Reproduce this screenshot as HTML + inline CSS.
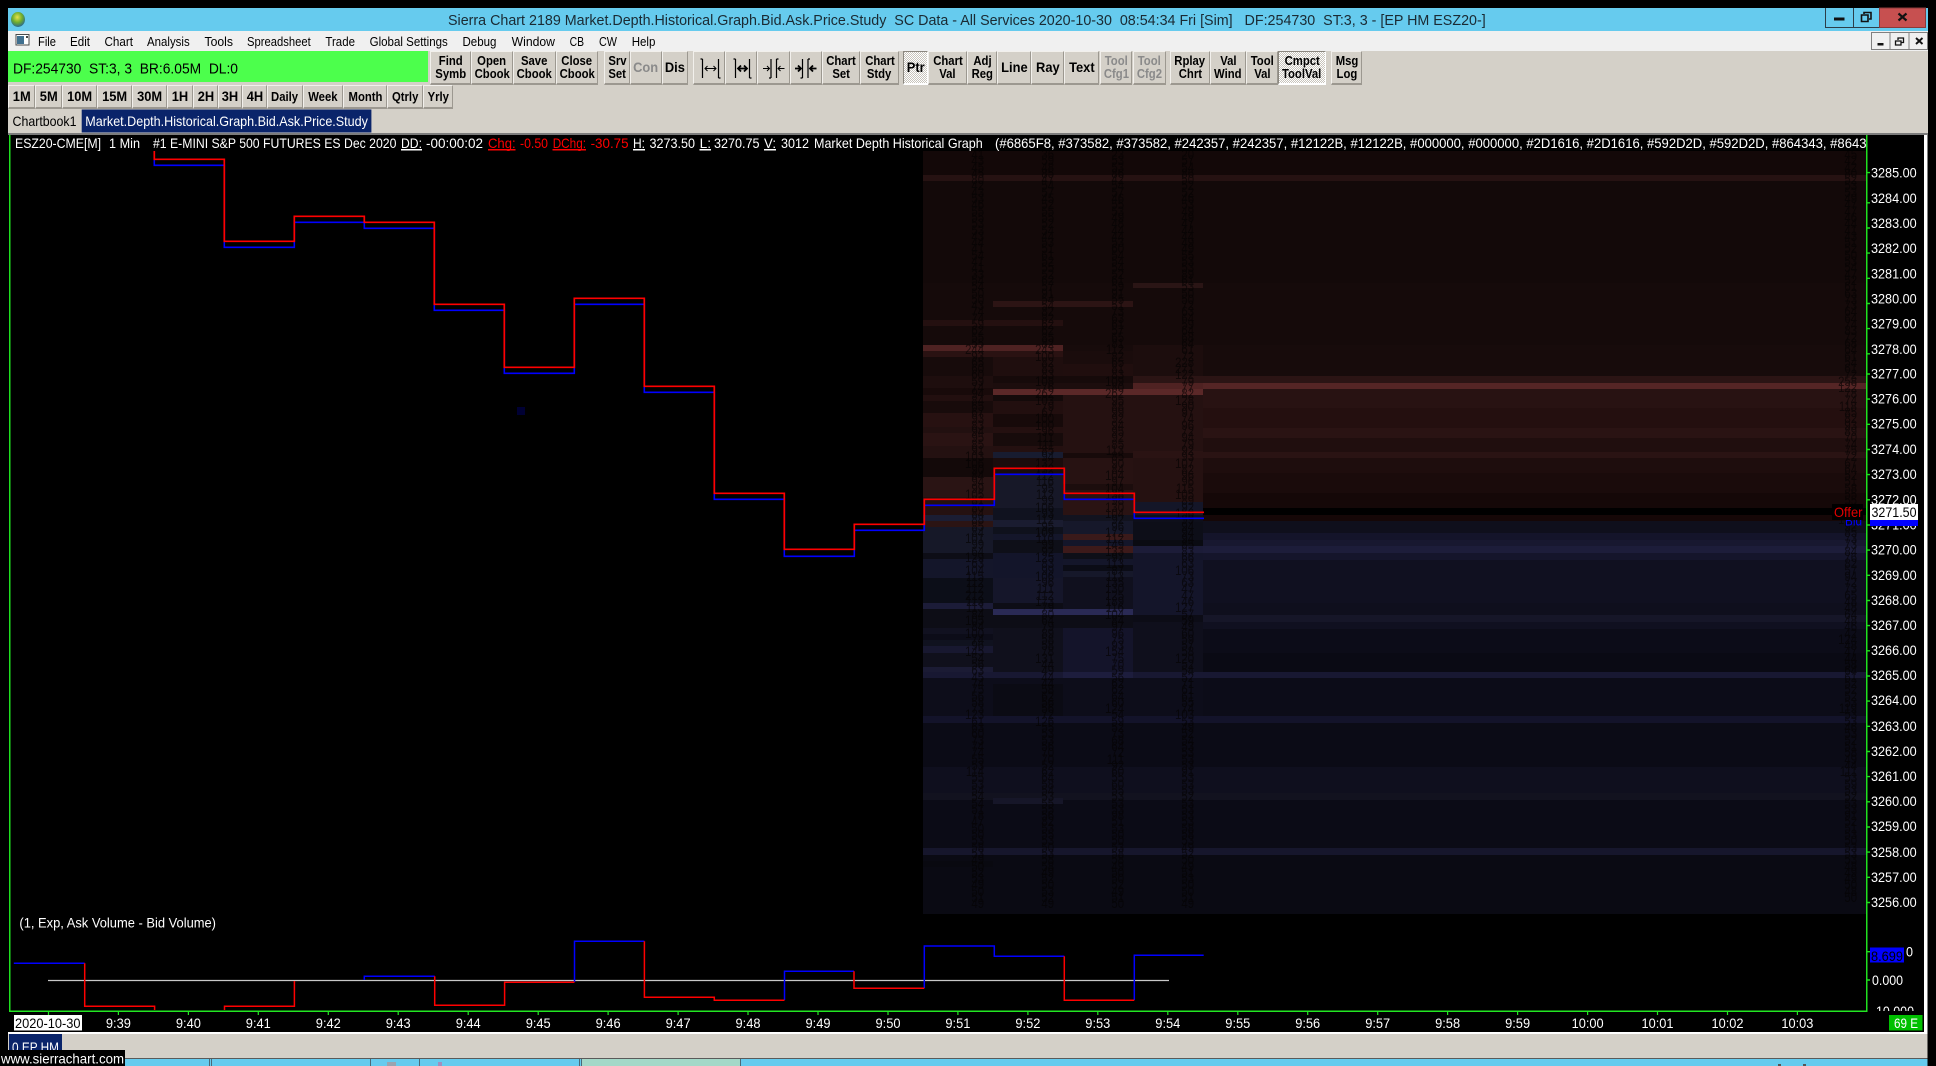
<!DOCTYPE html>
<html>
<head>
<meta charset="utf-8">
<title>Sierra Chart</title>
<style>
html,body{margin:0;padding:0;background:#000;width:1936px;height:1066px;overflow:hidden}
#p{position:relative;width:1936px;height:1066px;overflow:hidden;background:#000}
svg{position:absolute;left:0;top:0}
text{font-family:"Liberation Sans",sans-serif;font-size:14px;fill:#fff}
.b{position:absolute;box-sizing:border-box;background:#d4d0c8;border:1px solid;border-color:#f2f0ec #9c9890 #9c9890 #f2f0ec;border-bottom-width:2px;display:flex;flex-direction:column;align-items:center;justify-content:center;font:bold 13px/13.3px "Liberation Sans",sans-serif;color:#000;overflow:visible}
.b i{font-style:normal;display:block;white-space:nowrap;transform:scaleX(.87)}
.r1{top:51px;height:33.5px}
.r2{top:85px;height:24px}
.l{font-size:14px}
.l i{transform:scaleX(.92)}
.d{color:#8a8a8a}
.p{background:repeating-conic-gradient(#fff 0 25%,#c8c4bc 0 50%) 0 0/2px 2px;border-color:#8c8880 #fff #fff #8c8880}
.n{position:absolute;top:151px;height:763px;width:40px;overflow:hidden;text-align:right;white-space:pre-line;font:14px/6.295px "Liberation Sans",sans-serif;color:#050303;opacity:.65;transform:scaleX(.81);transform-origin:right top}
</style>
</head>
<body>
<div id="p">
<svg width="1936" height="1066" viewBox="0 0 1936 1066" shape-rendering="crispEdges">
<defs>
<radialGradient id="g" cx="45%" cy="35%" r="70%"><stop offset="0" stop-color="#e8e24a"/><stop offset=".5" stop-color="#6fae2e"/><stop offset="1" stop-color="#1f5f9e"/></radialGradient>
</defs>
<rect x="8" y="8" width="1920" height="23" fill="#66cbee"/>
<rect x="8" y="31" width="1920" height="20" fill="#f0f0f0"/>
<rect x="8" y="51" width="1920" height="83" fill="#d4d0c8"/>
<rect x="8" y="51" width="420" height="31" fill="#4cff4c"/>
<rect x="8" y="133" width="1920" height="2" fill="#7c7c7c"/>
<rect x="8" y="135" width="1916" height="897" fill="#000"/>
<rect x="1924" y="135" width="3.5" height="899" fill="#fff"/>
<rect x="8" y="1032" width="1919.5" height="2" fill="#fff"/>
<rect x="8" y="1034" width="1919.5" height="24" fill="#d4d0c8"/>
<rect x="125" y="1058" width="1802.5" height="1" fill="#5a5a5a"/>
<rect x="125" y="1059" width="1802.5" height="7" fill="#66cbee"/>
<rect x="581" y="1059" width="159" height="7" fill="#a4d8c8"/>
<path d="M209.5 1059v7M211.5 1059v7M370.5 1059v7M419.5 1059v7M579.5 1059v7M581.5 1059v7M740.5 1059v7" stroke="#4a6a78" fill="none"/>
<rect x="387" y="1062" width="9" height="4" fill="#9aa4b0"/>
<rect x="438" y="1062" width="4" height="4" fill="#a090c0"/>
<rect x="1778" y="1064" width="3" height="2" fill="#555"/>
<rect x="1803" y="1064" width="3" height="2" fill="#555"/>

<!-- heatmap base -->
<rect x="923" y="151" width="943" height="24" fill="#130808"/>
<rect x="923" y="175" width="943" height="6" fill="#261212"/>
<rect x="923" y="181" width="943" height="102" fill="#130909"/>
<rect x="923" y="283" width="943" height="62" fill="#150a0a"/>
<rect x="923" y="345" width="280" height="170" fill="#1c0d0d"/>
<!-- column 1 -->
<rect x="923" y="320" width="70" height="6" fill="#241010"/>
<rect x="923" y="345" width="70" height="6" fill="#4e2222"/>
<rect x="923" y="351" width="70" height="6" fill="#2a1212"/>
<rect x="923" y="357" width="70" height="19" fill="#170b0b"/>
<rect x="923" y="376" width="70" height="12" fill="#1e0e0e"/>
<rect x="923" y="388" width="70" height="7" fill="#180a0a"/>
<rect x="923" y="395" width="70" height="6" fill="#220f0f"/>
<rect x="923" y="401" width="70" height="12" fill="#180b0b"/>
<rect x="923" y="413" width="70" height="14" fill="#271111"/>
<rect x="923" y="427" width="70" height="6" fill="#221010"/>
<rect x="923" y="433" width="70" height="13" fill="#2a1313"/>
<rect x="923" y="446" width="70" height="12" fill="#241111"/>
<rect x="923" y="458" width="70" height="19" fill="#130909"/>
<rect x="923" y="477" width="70" height="20" fill="#2a1414"/>
<rect x="923" y="497" width="70" height="18" fill="#251111"/>
<rect x="923" y="515" width="70" height="6" fill="#1b1d33"/>
<rect x="923" y="521" width="70" height="6" fill="#2b1414"/>
<rect x="923" y="527" width="70" height="26" fill="#161828"/>
<rect x="923" y="553" width="70" height="6" fill="#0d0d16"/>
<rect x="923" y="559" width="70" height="19" fill="#14162a"/>
<rect x="923" y="578" width="70" height="25" fill="#0c0e18"/>
<rect x="923" y="603" width="70" height="6" fill="#1c1c38"/>
<rect x="923" y="609" width="70" height="19" fill="#0d0d16"/>
<rect x="923" y="628" width="70" height="6" fill="#111120"/>
<rect x="923" y="634" width="70" height="6" fill="#0c0c18"/>
<rect x="923" y="640" width="70" height="6" fill="#10121f"/>
<rect x="923" y="646" width="70" height="7" fill="#181830"/>
<rect x="923" y="653" width="70" height="14" fill="#10101c"/>
<rect x="923" y="667" width="70" height="11" fill="#1b1b34"/>
<!-- column 2 -->
<rect x="993" y="301" width="70" height="6" fill="#2c1414"/>
<rect x="993" y="320" width="70" height="6" fill="#241010"/>
<rect x="993" y="345" width="70" height="6" fill="#4e2222"/>
<rect x="993" y="351" width="70" height="6" fill="#2a1212"/>
<rect x="993" y="357" width="70" height="19" fill="#1f0e0e"/>
<rect x="993" y="376" width="70" height="7" fill="#160a0a"/>
<rect x="993" y="383" width="70" height="6" fill="#1c0d0d"/>
<rect x="993" y="389" width="70" height="6" fill="#5b2828"/>
<rect x="993" y="395" width="70" height="6" fill="#140a0a"/>
<rect x="993" y="401" width="70" height="13" fill="#220f0f"/>
<rect x="993" y="414" width="70" height="13" fill="#170a0a"/>
<rect x="993" y="427" width="70" height="6" fill="#241010"/>
<rect x="993" y="433" width="70" height="13" fill="#170b0b"/>
<rect x="993" y="446" width="70" height="6" fill="#241010"/>
<rect x="993" y="452" width="70" height="6" fill="#181c30"/>
<rect x="993" y="458" width="70" height="17" fill="#1a0c0c"/>
<rect x="993" y="475" width="70" height="33" fill="#171828"/>
<rect x="993" y="508" width="70" height="12" fill="#10121f"/>
<rect x="993" y="520" width="70" height="7" fill="#1a1c30"/>
<rect x="993" y="527" width="70" height="7" fill="#0f111c"/>
<rect x="993" y="534" width="70" height="6" fill="#14162a"/>
<rect x="993" y="540" width="70" height="13" fill="#0e0f18"/>
<rect x="993" y="553" width="70" height="25" fill="#13152a"/>
<rect x="993" y="578" width="70" height="25" fill="#15162a"/>
<rect x="993" y="603" width="70" height="6" fill="#0d0d16"/>
<rect x="993" y="609" width="70" height="6" fill="#2a2a55"/>
<rect x="993" y="615" width="70" height="13" fill="#0d0d16"/>
<rect x="993" y="628" width="70" height="44" fill="#10101c"/>
<!-- column 3 -->
<rect x="1063" y="301" width="70" height="6" fill="#2c1414"/>
<rect x="1063" y="345" width="70" height="6" fill="#170b0b"/>
<rect x="1063" y="351" width="70" height="13" fill="#1a0c0c"/>
<rect x="1063" y="364" width="70" height="12" fill="#200e0e"/>
<rect x="1063" y="376" width="70" height="7" fill="#160a0a"/>
<rect x="1063" y="383" width="70" height="6" fill="#1c0d0d"/>
<rect x="1063" y="389" width="70" height="6" fill="#5b2828"/>
<rect x="1063" y="395" width="70" height="58" fill="#251111"/>
<rect x="1063" y="453" width="70" height="5" fill="#170a0a"/>
<rect x="1063" y="458" width="70" height="26" fill="#271212"/>
<rect x="1063" y="484" width="70" height="6" fill="#1c0d0d"/>
<rect x="1063" y="490" width="70" height="25" fill="#2a1313"/>
<rect x="1063" y="515" width="70" height="6" fill="#12131f"/>
<rect x="1063" y="521" width="70" height="13" fill="#16182a"/>
<rect x="1063" y="534" width="70" height="6" fill="#3a1a1a"/>
<rect x="1063" y="540" width="70" height="6" fill="#14162a"/>
<rect x="1063" y="546" width="70" height="7" fill="#3d1a1a"/>
<rect x="1063" y="553" width="70" height="6" fill="#0e0f18"/>
<rect x="1063" y="559" width="70" height="6" fill="#14162a"/>
<rect x="1063" y="565" width="70" height="6" fill="#0b0c16"/>
<rect x="1063" y="571" width="70" height="6" fill="#16182a"/>
<rect x="1063" y="577" width="70" height="32" fill="#10101e"/>
<rect x="1063" y="609" width="70" height="6" fill="#2a2a55"/>
<rect x="1063" y="615" width="70" height="13" fill="#0d0d16"/>
<rect x="1063" y="628" width="70" height="44" fill="#14142a"/>
<!-- column 4 -->
<rect x="1133" y="283" width="70" height="5" fill="#2a1515"/>
<rect x="1133" y="376" width="70" height="7" fill="#2b1414"/>
<rect x="1133" y="383" width="70" height="6" fill="#4f2222"/>
<rect x="1133" y="389" width="70" height="6" fill="#5b2828"/>
<rect x="1133" y="395" width="70" height="107" fill="#251111"/>
<rect x="1133" y="451" width="70" height="7" fill="#2a1313"/>
<rect x="1133" y="502" width="70" height="13" fill="#141628"/>
<rect x="1133" y="515" width="70" height="7" fill="#0e0f1a"/>
<rect x="1133" y="522" width="70" height="18" fill="#0d0e18"/>
<rect x="1133" y="540" width="70" height="6" fill="#0a0b12"/>
<rect x="1133" y="546" width="70" height="7" fill="#1c1c38"/>
<rect x="1133" y="553" width="70" height="62" fill="#14152a"/>
<rect x="1133" y="615" width="70" height="7" fill="#0c0c16"/>
<rect x="1133" y="622" width="70" height="50" fill="#0f0f1c"/>
<!-- right region -->
<rect x="1203" y="345" width="663" height="31" fill="#170b0b"/>
<rect x="1203" y="376" width="663" height="7" fill="#2b1414"/>
<rect x="1203" y="383" width="663" height="6" fill="#552525"/>
<rect x="1203" y="389" width="663" height="19" fill="#281212"/>
<rect x="1203" y="408" width="663" height="20" fill="#240f0f"/>
<rect x="1203" y="428" width="663" height="10" fill="#2a1313"/>
<rect x="1203" y="438" width="663" height="14" fill="#200e0e"/>
<rect x="1203" y="452" width="663" height="6" fill="#2a1313"/>
<rect x="1203" y="458" width="663" height="15" fill="#1e0d0d"/>
<rect x="1203" y="473" width="663" height="20" fill="#1a0b0b"/>
<rect x="1203" y="493" width="663" height="15" fill="#150808"/>
<rect x="1203" y="508" width="663" height="7" fill="#000"/>
<rect x="1203" y="515" width="663" height="6" fill="#150707"/>
<rect x="1203" y="521" width="663" height="12" fill="#0f0f1c"/>
<rect x="1203" y="533" width="663" height="7" fill="#14142a"/>
<rect x="1203" y="540" width="663" height="6" fill="#181830"/>
<rect x="1203" y="546" width="663" height="7" fill="#1d1d3a"/>
<rect x="1203" y="553" width="663" height="7" fill="#15152b"/>
<rect x="1203" y="560" width="663" height="43" fill="#101020"/>
<rect x="1203" y="603" width="663" height="12" fill="#0f0f1d"/>
<rect x="1203" y="615" width="663" height="7" fill="#161628"/>
<rect x="1203" y="622" width="663" height="7" fill="#101020"/>
<rect x="1203" y="629" width="663" height="24" fill="#0c0c18"/>
<rect x="1203" y="653" width="663" height="19" fill="#0a0a14"/>
<!-- lower area all columns -->
<rect x="923" y="678" width="943" height="236" fill="#0c0c18"/>
<rect x="923" y="672" width="943" height="6" fill="#181832"/>
<rect x="1063" y="672" width="70" height="6" fill="#1d1d3d"/>
<rect x="923" y="678" width="280" height="38" fill="#0d0d1a"/>
<rect x="993" y="684" width="70" height="32" fill="#0b0b14"/>
<rect x="923" y="716" width="943" height="7" fill="#13132a"/>
<rect x="923" y="723" width="943" height="44" fill="#0b0b16"/>
<rect x="923" y="767" width="943" height="26" fill="#0f0f1e"/>
<rect x="923" y="793" width="943" height="7" fill="#12121f"/>
<rect x="923" y="800" width="943" height="48" fill="#0b0b16"/>
<rect x="993" y="798" width="70" height="6" fill="#161628"/>
<rect x="923" y="848" width="943" height="7" fill="#16162c"/>
<rect x="923" y="855" width="943" height="59" fill="#0a0a13"/>
<rect x="923" y="861" width="70" height="6" fill="#090910"/>

<!-- frame lines -->
<rect x="9" y="135" width="1.5" height="877" fill="#1fe01f"/>
</svg>

<div class="n" style="left:944px">41
43
45
45
80
42
43
53
46
55
55
53
53
43
44
41
54
41
41
33
54
54
50
50
43
74
74
59
62
55
55
244
93
65
60
60
59
74
94
84
65
67
93
83
94
95
85
91
103
106
90
84
94
99
105
81
80
84
88
85
84
101
99
64
129
63
104
115
112
112
212
113
113
84
105
84
100
74
96
145
54
56
63
45
74
75
56
58
73
123
61
63
60
73
74
74
55
53
114
55
53
54
54
54
51
78
47
50
50
53
58
53
49
50
52
53
49
50
51
49</div>
<div class="n" style="left:1014px">36
59
48
85
47
54
57
45
52
55
55
52
54
44
53
51
61
52
55
52
62
57
91
54
54
82
82
62
62
85
82
243
100
82
83
83
108
76
262
103
79
67
100
100
96
111
111
85
94
132
132
112
116
95
112
99
106
93
112
95
109
110
99
92
125
83
99
106
96
111
112
173
79
80
64
79
89
58
58
78
131
44
49
44
44
58
62
56
56
72
126
55
53
53
56
70
70
52
62
64
58
54
53
55
55
56
82
53
55
53
50
53
58
58
49
52
50
53
52
49</div>
<div class="n" style="left:1084px">23
53
53
86
42
54
57
46
55
53
49
48
44
44
53
60
54
54
54
52
61
59
91
55
51
73
63
61
57
65
81
112
82
65
81
83
109
80
262
95
88
99
92
94
95
92
85
113
85
90
84
104
97
104
138
98
130
104
92
96
172
112
149
133
97
113
87
113
135
130
125
189
116
104
84
97
96
75
93
154
75
70
59
56
62
62
64
60
124
54
59
52
73
68
64
72
111
92
60
55
60
55
53
53
53
98
51
53
50
50
53
58
58
49
50
50
52
49
51
50</div>
<div class="n" style="left:1154px">20
57
54
86
50
52
52
46
53
49
49
47
44
44
49
49
55
53
53
89
61
53
50
50
72
63
64
59
64
68
64
61
72
228
271
122
79
77
82
128
90
97
74
96
72
94
79
92
93
107
82
96
96
115
105
89
92
156
99
94
94
94
85
83
66
63
106
73
63
47
47
46
127
57
59
49
60
59
57
58
120
52
54
52
71
61
61
55
74
103
53
49
52
54
53
53
53
53
91
53
53
53
52
53
53
53
53
58
58
53
49
52
50
49
51
53
50
50
51
49</div>
<div class="n" style="left:1817px">45
42
42
80
52
53
53
49
47
47
46
44
41
43
51
52
50
53
54
47
52
61
63
73
73
64
64
74
83
72
68
64
61
54
61
72
258
122
78
74
118
85
82
93
89
70
74
75
72
67
64
52
51
58
55
55
54
90
151
92
85
73
73
84
76
82
57
94
72
73
65
48
48
64
48
46
42
124
48
47
44
58
64
61
52
52
52
53
119
53
53
46
53
52
51
58
49
44
111
53
59
53
52
53
53
91
52
51
53
50
53
53
53
48
49
49
50
48
50</div>

<svg width="1936" height="1066" viewBox="0 0 1936 1066">
<!-- title bar -->
<ellipse cx="18" cy="19.5" rx="7" ry="7.5" fill="url(#g)"/>
<text x="448" y="25" font-size="15" style="font-size:15px;fill:#1a2a33" textLength="1037.7" lengthAdjust="spacingAndGlyphs" xml:space="preserve">Sierra Chart 2189 Market.Depth.Historical.Graph.Bid.Ask.Price.Study  SC Data - All Services 2020-10-30  08:54:34 Fri [Sim]   DF:254730  ST:3, 3 - [EP HM ESZ20-]</text>
<!-- window buttons -->
<path d="M1825.5 8v19.5H1879.5M1853.5 8v19.5" stroke="#2c3e48" fill="none" stroke-width="1"/>
<rect x="1879.5" y="8" width="46" height="19.5" fill="#c75050" stroke="#8a3a3a"/>
<rect x="1834" y="17.5" width="10.5" height="3" fill="#111"/>
<path d="M1864 14V12.5H1871V19H1869M1861.5 15H1868V21.5H1861.5Z" stroke="#111" stroke-width="1.6" fill="none"/>
<path d="M1898.5 13.5L1906.5 20.5M1906.5 13.5L1898.5 20.5" stroke="#111" stroke-width="2.2" fill="none"/>
<!-- MDI buttons -->
<rect x="1871.5" y="32.5" width="18.5" height="17" fill="#f0f0f0" stroke="#808080"/>
<rect x="1890" y="32.5" width="19" height="17" fill="#f0f0f0" stroke="#808080"/>
<rect x="1909" y="32.5" width="18.5" height="17" fill="#f0f0f0" stroke="#808080"/>
<rect x="1877.5" y="43" width="6" height="2.5" fill="#111"/>
<path d="M1898 40V38H1903.5V42.5H1901.5M1895.5 41H1901V45H1895.5Z" stroke="#111" stroke-width="1.3" fill="none"/>
<path d="M1916 38L1922.5 44M1922.5 38L1916 44" stroke="#111" stroke-width="1.9" fill="none"/>
<!-- menu -->
<rect x="16" y="34.5" width="13" height="10.5" fill="#fff" stroke="#4a4a4a"/>
<rect x="17" y="36" width="7" height="8" fill="#3f6f8f"/>
<rect x="26" y="36" width="2" height="2" fill="#444"/>
<g style="fill:#000">
<text x="38" y="46" textLength="18" lengthAdjust="spacingAndGlyphs" style="font-size:13px;fill:#000">File</text>
<text x="70" y="46" textLength="20" lengthAdjust="spacingAndGlyphs" style="font-size:13px;fill:#000">Edit</text>
<text x="104.5" y="46" textLength="28.5" lengthAdjust="spacingAndGlyphs" style="font-size:13px;fill:#000">Chart</text>
<text x="147" y="46" textLength="42.7" lengthAdjust="spacingAndGlyphs" style="font-size:13px;fill:#000">Analysis</text>
<text x="204.5" y="46" textLength="28.5" lengthAdjust="spacingAndGlyphs" style="font-size:13px;fill:#000">Tools</text>
<text x="247" y="46" textLength="63.7" lengthAdjust="spacingAndGlyphs" style="font-size:13px;fill:#000">Spreadsheet</text>
<text x="325.4" y="46" textLength="29.6" lengthAdjust="spacingAndGlyphs" style="font-size:13px;fill:#000">Trade</text>
<text x="369.6" y="46" textLength="78.2" lengthAdjust="spacingAndGlyphs" style="font-size:13px;fill:#000">Global Settings</text>
<text x="462.5" y="46" textLength="33.9" lengthAdjust="spacingAndGlyphs" style="font-size:13px;fill:#000">Debug</text>
<text x="511.6" y="46" textLength="43.4" lengthAdjust="spacingAndGlyphs" style="font-size:13px;fill:#000">Window</text>
<text x="569.6" y="46" textLength="14.4" lengthAdjust="spacingAndGlyphs" style="font-size:13px;fill:#000">CB</text>
<text x="599" y="46" textLength="18" lengthAdjust="spacingAndGlyphs" style="font-size:13px;fill:#000">CW</text>
<text x="631.7" y="46" textLength="23.7" lengthAdjust="spacingAndGlyphs" style="font-size:13px;fill:#000">Help</text>
</g>
<text x="13" y="73.5" textLength="225" lengthAdjust="spacingAndGlyphs" xml:space="preserve" style="font-size:15px;fill:#000">DF:254730  ST:3, 3  BR:6.05M  DL:0</text>
<!-- tabs -->
<rect x="81.7" y="109.5" width="289.7" height="23" fill="#0a246a"/>
<text x="12.5" y="126" textLength="64" lengthAdjust="spacingAndGlyphs" style="font-size:14px;fill:#000">Chartbook1</text>
<text x="85.3" y="126" textLength="282.6" lengthAdjust="spacingAndGlyphs" style="font-size:14px">Market.Depth.Historical.Graph.Bid.Ask.Price.Study</text>
<!-- info line -->
<text x="15" y="148" textLength="86" lengthAdjust="spacingAndGlyphs">ESZ20-CME[M]</text>
<text x="109" y="148" textLength="31" lengthAdjust="spacingAndGlyphs">1 Min</text>
<text x="153" y="148" textLength="243.4" lengthAdjust="spacingAndGlyphs">#1 E-MINI S&amp;P 500 FUTURES ES Dec 2020</text>
<text x="401" y="148" textLength="21" lengthAdjust="spacingAndGlyphs">DD:</text>
<text x="426" y="148" textLength="57" lengthAdjust="spacingAndGlyphs">-00:00:02</text>
<text x="488" y="148" textLength="27.6" lengthAdjust="spacingAndGlyphs" style="fill:#f00">Chg:</text>
<text x="520" y="148" textLength="28" lengthAdjust="spacingAndGlyphs" style="fill:#f00">-0.50</text>
<text x="552.7" y="148" textLength="33.3" lengthAdjust="spacingAndGlyphs" style="fill:#f00">DChg:</text>
<text x="590.6" y="148" textLength="38" lengthAdjust="spacingAndGlyphs" style="fill:#f00">-30.75</text>
<text x="633" y="148" textLength="12" lengthAdjust="spacingAndGlyphs">H:</text>
<text x="649.5" y="148" textLength="45.5" lengthAdjust="spacingAndGlyphs">3273.50</text>
<text x="699.6" y="148" textLength="11.4" lengthAdjust="spacingAndGlyphs">L:</text>
<text x="714" y="148" textLength="45.5" lengthAdjust="spacingAndGlyphs">3270.75</text>
<text x="764" y="148" textLength="12" lengthAdjust="spacingAndGlyphs">V:</text>
<text x="781" y="148" textLength="28" lengthAdjust="spacingAndGlyphs">3012</text>
<text x="814" y="148" textLength="168.7" lengthAdjust="spacingAndGlyphs">Market Depth Historical Graph</text>
<text x="995" y="148" textLength="871.5" lengthAdjust="spacingAndGlyphs">(#6865F8, #373582, #373582, #242357, #242357, #12122B, #12122B, #000000, #000000, #2D1616, #2D1616, #592D2D, #592D2D, #864343, #8643</text>
<g shape-rendering="crispEdges">
<rect x="401" y="149" width="21" height="1.5" fill="#fff"/>
<rect x="488" y="149" width="27.6" height="1.5" fill="#f00"/>
<rect x="552.7" y="149" width="33.3" height="1.5" fill="#f00"/>
<rect x="633" y="149" width="12" height="1.5" fill="#fff"/>
<rect x="699.6" y="149" width="11.4" height="1.5" fill="#fff"/>
<rect x="764" y="149" width="12" height="1.5" fill="#fff"/>
<rect x="1866" y="135" width="1.5" height="877" fill="#1fe01f"/>
<rect x="9.5" y="1010.7" width="1858" height="1.5" fill="#22e622"/>
<rect x="517" y="407" width="8" height="8" fill="#000033"/>
</g>
<!-- price series -->
<path d="M154.3 159.3V165.3H224.3V247.3H294.3V222.3H364.3V228.3H434.3V310.3H504.3V373.3H574.3V304.3H644.3V392.3H714.3V499.3H784.3V556.3H854.3V530.3H924.3V505.3H994.3V474.3H1064.3V499.3H1134.3V518.3H1204" stroke="#0000ff" stroke-width="1.6" fill="none"/>
<path d="M154.3 151V159.3H224.3V241.3H294.3V216.3H364.3V222.3H434.3V304.3H504.3V367.3H574.3V298.3H644.3V386.3H714.3V493.3H784.3V549.3H854.3V524.3H924.3V499.3H994.3V468.3H1064.3V493.3H1134.3V512.3H1204" stroke="#ff0000" stroke-width="1.7" fill="none"/>
<!-- price scale -->
<path d="M1866 172.6h4M1866 202.8h4M1866 228h4M1866 253.1h4M1866 278.3h4M1866 303.5h4M1866 328.6h4M1866 353.8h4M1866 374h4M1866 399.1h4M1866 424.3h4M1866 449.5h4M1866 474.6h4M1866 499.8h4M1866 525h4M1866 550.1h4M1866 575.3h4M1866 600.5h4M1866 625.6h4M1866 650.8h4M1866 676h4M1866 701.1h4M1866 726.3h4M1866 751.5h4M1866 776.6h4M1866 801.8h4M1866 827h4M1866 852.1h4M1866 877.3h4M1866 902.5h4M1866 951.7h4M1866 980h4" stroke="#1fe01f" stroke-width="1.4" fill="none"/>
<g>
<text x="1871" y="177.6" textLength="45.7" lengthAdjust="spacingAndGlyphs">3285.00</text>
<text x="1871" y="202.8" textLength="45.7" lengthAdjust="spacingAndGlyphs">3284.00</text>
<text x="1871" y="228" textLength="45.7" lengthAdjust="spacingAndGlyphs">3283.00</text>
<text x="1871" y="253.1" textLength="45.7" lengthAdjust="spacingAndGlyphs">3282.00</text>
<text x="1871" y="278.3" textLength="45.7" lengthAdjust="spacingAndGlyphs">3281.00</text>
<text x="1871" y="303.5" textLength="45.7" lengthAdjust="spacingAndGlyphs">3280.00</text>
<text x="1871" y="328.6" textLength="45.7" lengthAdjust="spacingAndGlyphs">3279.00</text>
<text x="1871" y="353.8" textLength="45.7" lengthAdjust="spacingAndGlyphs">3278.00</text>
<text x="1871" y="378.6" textLength="45.7" lengthAdjust="spacingAndGlyphs">3277.00</text>
<text x="1871" y="403.6" textLength="45.7" lengthAdjust="spacingAndGlyphs">3276.00</text>
<text x="1871" y="428.6" textLength="45.7" lengthAdjust="spacingAndGlyphs">3275.00</text>
<text x="1871" y="454" textLength="45.7" lengthAdjust="spacingAndGlyphs">3274.00</text>
<text x="1871" y="479" textLength="45.7" lengthAdjust="spacingAndGlyphs">3273.00</text>
<text x="1871" y="504.3" textLength="45.7" lengthAdjust="spacingAndGlyphs">3272.00</text>
<text x="1871" y="529.5" textLength="45.7" lengthAdjust="spacingAndGlyphs">3271.00</text>
<text x="1871" y="554.5" textLength="45.7" lengthAdjust="spacingAndGlyphs">3270.00</text>
<text x="1871" y="580" textLength="45.7" lengthAdjust="spacingAndGlyphs">3269.00</text>
<text x="1871" y="605" textLength="45.7" lengthAdjust="spacingAndGlyphs">3268.00</text>
<text x="1871" y="630" textLength="45.7" lengthAdjust="spacingAndGlyphs">3267.00</text>
<text x="1871" y="655" textLength="45.7" lengthAdjust="spacingAndGlyphs">3266.00</text>
<text x="1871" y="680" textLength="45.7" lengthAdjust="spacingAndGlyphs">3265.00</text>
<text x="1871" y="705" textLength="45.7" lengthAdjust="spacingAndGlyphs">3264.00</text>
<text x="1871" y="731" textLength="45.7" lengthAdjust="spacingAndGlyphs">3263.00</text>
<text x="1871" y="756" textLength="45.7" lengthAdjust="spacingAndGlyphs">3262.00</text>
<text x="1871" y="781" textLength="45.7" lengthAdjust="spacingAndGlyphs">3261.00</text>
<text x="1871" y="806" textLength="45.7" lengthAdjust="spacingAndGlyphs">3260.00</text>
<text x="1871" y="831" textLength="45.7" lengthAdjust="spacingAndGlyphs">3259.00</text>
<text x="1871" y="857" textLength="45.7" lengthAdjust="spacingAndGlyphs">3258.00</text>
<text x="1871" y="882" textLength="45.7" lengthAdjust="spacingAndGlyphs">3257.00</text>
<text x="1871" y="907" textLength="45.7" lengthAdjust="spacingAndGlyphs">3256.00</text>
</g>
<!-- bid / offer -->
<text x="1845" y="525.5" textLength="17" lengthAdjust="spacingAndGlyphs" style="fill:#0000ff">Bid</text>
<rect x="1832" y="504" width="31" height="16" fill="#000" shape-rendering="crispEdges"/>
<text x="1834" y="517" textLength="28.5" lengthAdjust="spacingAndGlyphs" style="fill:#e00000">Offer</text>
<rect x="1870" y="520" width="48" height="6" fill="#0000ff" shape-rendering="crispEdges"/>
<rect x="1870" y="504" width="48" height="16" fill="#fff" shape-rendering="crispEdges"/>
<text x="1871.5" y="517" textLength="45" lengthAdjust="spacingAndGlyphs" style="fill:#000">3271.50</text>
<!-- study sub graph -->
<text x="19.4" y="927.5" textLength="196.6" lengthAdjust="spacingAndGlyphs">(1, Exp, Ask Volume - Bid Volume)</text>
<path d="M48 980.5H1169" stroke="#c8c8c8" stroke-width="1.3" fill="none"/>
<path d="M13.8 963.3H84.7M364.3 980V976.3H434.7M574.5 982V941.3H644.4M784.5 1000V971.3H854M924.3 988V946H994.3V956.3H1064.3M1134.3 1000V955.3H1203.7" stroke="#0000ff" stroke-width="1.5" fill="none"/>
<path d="M84.7 963.3V1006.3H154.6V1010M224.5 1010V1006.3H294.4V981M434.7 976.3V1005.3H504.6V982.3H574.5M644.4 941.3V997.3H714.3V1000.3H784.5M854 971.3V988.3H924.3M1064.3 956.3V1000.3H1134.3" stroke="#ff0000" stroke-width="1.5" fill="none"/>
<rect x="1870" y="947.3" width="34" height="15.4" fill="#0000ff" shape-rendering="crispEdges"/>
<text x="1871" y="961" textLength="32" lengthAdjust="spacingAndGlyphs" style="fill:#000">8.699</text>
<text x="1906" y="956.5" textLength="7" lengthAdjust="spacingAndGlyphs">0</text>
<text x="1872" y="985" textLength="31" lengthAdjust="spacingAndGlyphs">0.000</text>
<svg x="1870" y="1000" width="52" height="11"><text x="6" y="16" textLength="38" lengthAdjust="spacingAndGlyphs">10.000</text></svg>
<!-- time scale -->
<path d="M48.5 1011v4M118.4 1011v4M188.4 1011v4M258.3 1011v4M328.3 1011v4M398.2 1011v4M468.2 1011v4M538.2 1011v4M608.1 1011v4M678.1 1011v4M748 1011v4M818 1011v4M888 1011v4M957.9 1011v4M1027.9 1011v4M1097.8 1011v4M1167.8 1011v4M1237.8 1011v4M1307.7 1011v4M1377.7 1011v4M1447.6 1011v4M1517.6 1011v4M1587.6 1011v4M1657.5 1011v4M1727.5 1011v4M1797.4 1011v4" stroke="#22e622" stroke-width="1.2" fill="none"/>
<rect x="13.8" y="1015" width="68" height="15.7" fill="#fff" shape-rendering="crispEdges"/>
<text x="15" y="1028" textLength="65.5" lengthAdjust="spacingAndGlyphs" style="fill:#000">2020-10-30</text>
<g>
<text x="105.9" y="1028" textLength="25" lengthAdjust="spacingAndGlyphs">9:39</text>
<text x="175.9" y="1028" textLength="25" lengthAdjust="spacingAndGlyphs">9:40</text>
<text x="245.8" y="1028" textLength="25" lengthAdjust="spacingAndGlyphs">9:41</text>
<text x="315.8" y="1028" textLength="25" lengthAdjust="spacingAndGlyphs">9:42</text>
<text x="385.7" y="1028" textLength="25" lengthAdjust="spacingAndGlyphs">9:43</text>
<text x="455.7" y="1028" textLength="25" lengthAdjust="spacingAndGlyphs">9:44</text>
<text x="525.7" y="1028" textLength="25" lengthAdjust="spacingAndGlyphs">9:45</text>
<text x="595.6" y="1028" textLength="25" lengthAdjust="spacingAndGlyphs">9:46</text>
<text x="665.6" y="1028" textLength="25" lengthAdjust="spacingAndGlyphs">9:47</text>
<text x="735.5" y="1028" textLength="25" lengthAdjust="spacingAndGlyphs">9:48</text>
<text x="805.5" y="1028" textLength="25" lengthAdjust="spacingAndGlyphs">9:49</text>
<text x="875.5" y="1028" textLength="25" lengthAdjust="spacingAndGlyphs">9:50</text>
<text x="945.4" y="1028" textLength="25" lengthAdjust="spacingAndGlyphs">9:51</text>
<text x="1015.4" y="1028" textLength="25" lengthAdjust="spacingAndGlyphs">9:52</text>
<text x="1085.3" y="1028" textLength="25" lengthAdjust="spacingAndGlyphs">9:53</text>
<text x="1155.3" y="1028" textLength="25" lengthAdjust="spacingAndGlyphs">9:54</text>
<text x="1225.3" y="1028" textLength="25" lengthAdjust="spacingAndGlyphs">9:55</text>
<text x="1295.2" y="1028" textLength="25" lengthAdjust="spacingAndGlyphs">9:56</text>
<text x="1365.2" y="1028" textLength="25" lengthAdjust="spacingAndGlyphs">9:57</text>
<text x="1435.1" y="1028" textLength="25" lengthAdjust="spacingAndGlyphs">9:58</text>
<text x="1505.1" y="1028" textLength="25" lengthAdjust="spacingAndGlyphs">9:59</text>
<text x="1571.6" y="1028" textLength="32" lengthAdjust="spacingAndGlyphs">10:00</text>
<text x="1641.5" y="1028" textLength="32" lengthAdjust="spacingAndGlyphs">10:01</text>
<text x="1711.5" y="1028" textLength="32" lengthAdjust="spacingAndGlyphs">10:02</text>
<text x="1781.4" y="1028" textLength="32" lengthAdjust="spacingAndGlyphs">10:03</text>
</g>
<rect x="1889" y="1015" width="33.7" height="15.7" fill="#00c000" shape-rendering="crispEdges"/>
<text x="1894" y="1028" textLength="24" lengthAdjust="spacingAndGlyphs">69 E</text>
<!-- bottom tab and label -->
<rect x="9" y="1034" width="53" height="18" fill="#0a246a" shape-rendering="crispEdges"/>
<text x="12" y="1052" textLength="47" lengthAdjust="spacingAndGlyphs">0 EP HM</text>
<rect x="0" y="1050" width="125" height="16" fill="#000" shape-rendering="crispEdges"/>
<text x="1" y="1063.5" textLength="123" lengthAdjust="spacingAndGlyphs">www.sierrachart.com</text>
</svg>

<!-- toolbar row 1 -->
<div class="b r1" style="left:430px;width:41px"><i>Find</i><i>Symb</i></div>
<div class="b r1" style="left:471px;width:42px"><i>Open</i><i>Cbook</i></div>
<div class="b r1" style="left:513px;width:43px"><i>Save</i><i>Cbook</i></div>
<div class="b r1" style="left:556px;width:42px"><i>Close</i><i>Cbook</i></div>
<div class="b r1" style="left:604px;width:26px"><i>Srv</i><i>Set</i></div>
<div class="b r1 d l" style="left:630px;width:32px"><i>Con</i></div>
<div class="b r1 l" style="left:662px;width:26px"><i>Dis</i></div>
<div class="b r1" style="left:693px;width:32px"></div>
<div class="b r1" style="left:725px;width:32px"></div>
<div class="b r1" style="left:757px;width:33px"></div>
<div class="b r1" style="left:790px;width:32px"></div>
<div class="b r1" style="left:822px;width:38px"><i>Chart</i><i>Set</i></div>
<div class="b r1" style="left:860px;width:39px"><i>Chart</i><i>Stdy</i></div>
<div class="b r1 p l" style="left:903px;width:25px"><i>Ptr</i></div>
<div class="b r1" style="left:928px;width:39px"><i>Chart</i><i>Val</i></div>
<div class="b r1" style="left:967px;width:30px"><i>Adj</i><i>Reg</i></div>
<div class="b r1 l" style="left:997px;width:34px"><i>Line</i></div>
<div class="b r1 l" style="left:1031px;width:33px"><i>Ray</i></div>
<div class="b r1 l" style="left:1064px;width:35px"><i>Text</i></div>
<div class="b r1 d" style="left:1100px;width:32px"><i>Tool</i><i>Cfg1</i></div>
<div class="b r1 d" style="left:1133px;width:33px"><i>Tool</i><i>Cfg2</i></div>
<div class="b r1" style="left:1170px;width:40px"><i>Rplay</i><i>Chrt</i></div>
<div class="b r1" style="left:1210px;width:36px"><i>Val</i><i>Wind</i></div>
<div class="b r1" style="left:1246px;width:32px"><i>Tool</i><i>Val</i></div>
<div class="b r1 p" style="left:1278px;width:48px"><i>Cmpct</i><i>ToolVal</i></div>
<div class="b r1" style="left:1331px;width:31px"><i>Msg</i><i>Log</i></div>
<!-- toolbar row 2 -->
<div class="b r2 l" style="left:8px;width:27px"><i>1M</i></div>
<div class="b r2 l" style="left:35px;width:27px"><i>5M</i></div>
<div class="b r2 l" style="left:62px;width:35px"><i>10M</i></div>
<div class="b r2 l" style="left:97px;width:35px"><i>15M</i></div>
<div class="b r2 l" style="left:132px;width:35px"><i>30M</i></div>
<div class="b r2 l" style="left:167px;width:26px"><i>1H</i></div>
<div class="b r2 l" style="left:193px;width:25px"><i>2H</i></div>
<div class="b r2 l" style="left:218px;width:24px"><i>3H</i></div>
<div class="b r2 l" style="left:242px;width:25px"><i>4H</i></div>
<div class="b r2" style="left:267px;width:36px"><i>Daily</i></div>
<div class="b r2" style="left:303px;width:40px"><i>Week</i></div>
<div class="b r2" style="left:343px;width:44px"><i>Month</i></div>
<div class="b r2" style="left:387px;width:36px"><i>Qtrly</i></div>
<div class="b r2" style="left:423px;width:30px"><i>Yrly</i></div>

<!-- button glyph icons -->
<svg width="1936" height="1066" viewBox="0 0 1936 1066" style="pointer-events:none">
<g stroke="#000" fill="none" stroke-width="1.2">
<path d="M702.5 59V78M700.5 59h2M718.5 59V78M718.5 78h2"/>
<path d="M705 68.5H716M707.5 66L705 68.5L707.5 71M713.5 66L716 68.5L713.5 71" stroke-width="1"/>
<path d="M735.5 59V78M733.5 59h2M749.5 59V78M749.5 78h2"/>
<path d="M738 68.5H747M741 65.5L738 68.5L741 71.5M744 65.5L747 68.5L744 71.5" stroke-width="1.8"/>
<path d="M771 59V78M769 78h2M776.5 59V78M776.5 59h2"/>
<path d="M763 68.5H769.5M767 66L769.5 68.5L767 71M784.5 68.5H778M780.5 66L778 68.5L780.5 71" stroke-width="1"/>
<path d="M802.5 59V78M800.5 78h2M808 59V78M808 59h2"/>
<path d="M795 68.5H801M798 65.5L801 68.5L798 71.5M816.5 68.5H810M813 65.5L810 68.5L813 71.5" stroke-width="1.8"/>
</g>
</svg>
</div>
</body>
</html>
